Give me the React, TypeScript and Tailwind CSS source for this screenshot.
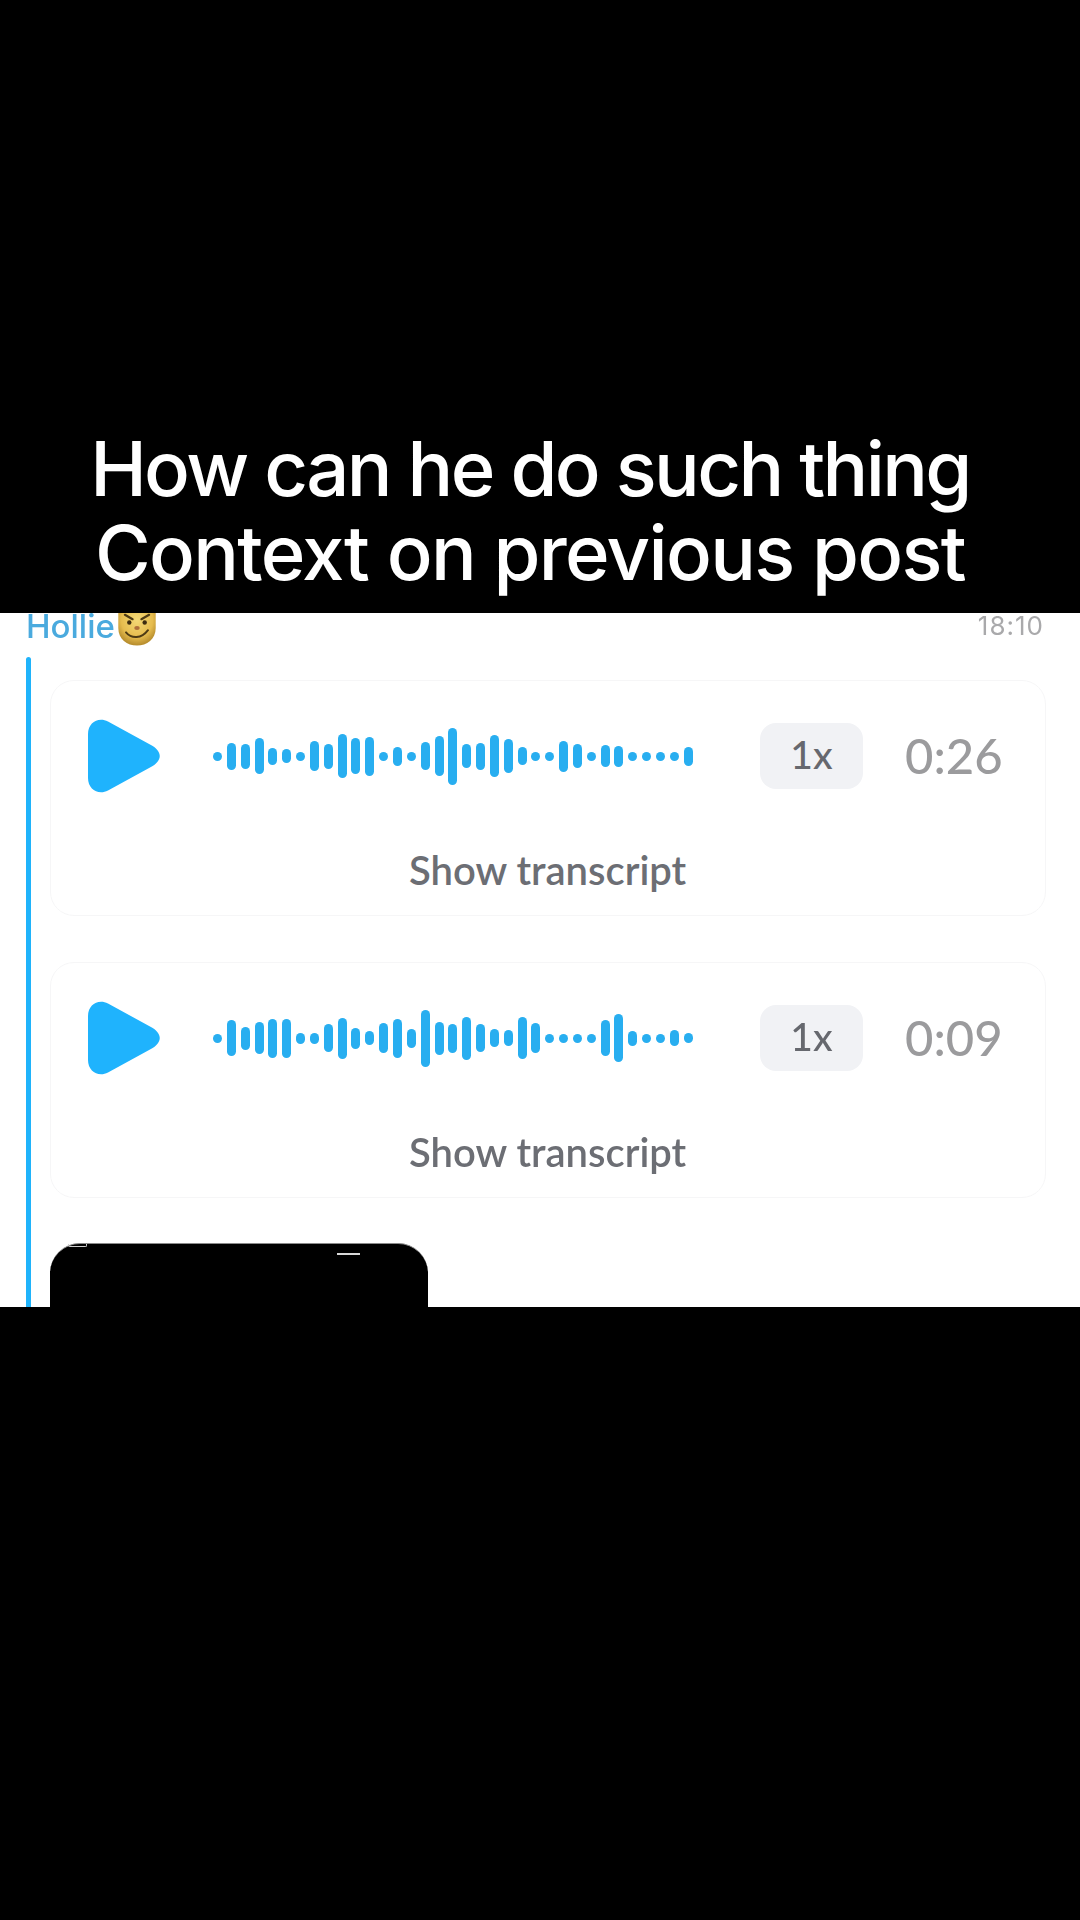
const rowA = [9,27,25,36,17,14,9,30,25,44,36,39,9,19,9,28,40,57,24,27,42,34,18,9,9,31,24,9,22,21,9,9,9,9,19];
const rowB = [9,36,23,32,39,39,11,11,28,41,21,14,30,39,19,57,33,29,43,28,18,16,42,30,9,9,9,9,36,48,15,9,9,16,10];

function Play() {
  return (
    <svg width="73" height="74" viewBox="0 0 73 74" className="shrink-0">
      <path d="M0 15C0 3.500 10.500 -2.500 20 2.500L62 25.500C75 32 75 42 62 48.500L20 71.500C10.500 76.500 0 70.500 0 59Z" fill="#1fb3fd" />
    </svg>
  );
}

function CatEmoji() {
  return (
    <svg width="44" height="44" viewBox="0 0 40 40" className="shrink-0 mt-[4px]">
      <defs>
        <radialGradient id="catFace" cx="50%" cy="38%" r="60%">
          <stop offset="0%" stopColor="#f4d977" />
          <stop offset="70%" stopColor="#e6bc4e" />
          <stop offset="100%" stopColor="#b98f2f" />
        </radialGradient>
      </defs>
      <path d="M3 -2L12 6H28L37 -2L37 20C37 30 29 36 20 36C11 36 3 30 3 20Z" fill="url(#catFace)" />
      <path d="M9 8L16 12M31 8L24 12" stroke="#4d3a14" strokeWidth="2" strokeLinecap="round" />
      <circle cx="13" cy="15" r="2" fill="#3d2c10" />
      <circle cx="27" cy="15" r="2" fill="#3d2c10" />
      <ellipse cx="20" cy="20" rx="2.500" ry="1.800" fill="#b0703a" />
      <path d="M10 24C15 30 24 30 30 22" stroke="#4d3a14" strokeWidth="1.800" fill="none" strokeLinecap="round" />
    </svg>
  );
}

function Voice({ bars, time }: { bars: number[]; time: string }) {
  return (
    <div className="h-[236px] rounded-[24px] border border-[#f6f6f7] bg-white pt-[38px] pr-[40px] pl-[37px]">
      <div className="flex h-[74px] items-center">
        <Play />
        <div className="ml-[52px] flex w-[480px] shrink-0 items-center justify-between">
          {bars.map((h, i) => (
            <div key={i} className="w-[9px] rounded-full bg-[#28aef0]" style={{ height: h }} />
          ))}
        </div>
        <div className="ml-[67px] flex h-[66px] w-[103px] shrink-0 items-center justify-center rounded-[16px] bg-[#f1f2f5] pb-[3px] font-['Lato',sans-serif] text-[39px] font-medium text-[#66686e]">
          1x
        </div>
        <div className="ml-[42px] pb-[2px] font-['Lato',sans-serif] text-[49px] leading-none font-medium text-[#9b9b9d]">
          {time}
        </div>
      </div>
      <div className="mt-[55px] pl-[321px] text-left font-['Lato',sans-serif] text-[40px] leading-[44px] font-semibold text-[#6c6e74]">
        Show transcript
      </div>
    </div>
  );
}

export default function App() {
  return (
    <div className="flex h-[1920px] w-[1080px] flex-col overflow-hidden bg-black">
      <div className="flex h-[613px] shrink-0 flex-col items-center pt-[426px] pr-[20px] font-['Inter',sans-serif] text-[76px] leading-[84px] font-medium text-white">
        <div className="tracking-[-2.6px]">How can he do such thing</div>
        <div className="tracking-[-1.7px]">Context on previous post</div>
      </div>
      <div className="flex h-[694px] shrink-0 flex-col overflow-hidden bg-white pl-[26px]">
        <div className="flex h-[44px] shrink-0 items-center justify-between pr-[36px] pb-[18px] blur-[0.5px]">
          <div className="flex items-center font-['Inter',sans-serif] text-[33px] leading-none font-medium text-[#4aaade]">
            Hollie
            <CatEmoji />
          </div>
          <div className="font-['Inter',sans-serif] text-[26px] leading-none tracking-[1px] text-[#a9a9ab]">18:10</div>
        </div>
        <div className="flex flex-1 gap-[19px]">
          <div className="h-full w-[5px] shrink-0 rounded-t-full bg-[#1fb3fb]" />
          <div className="flex flex-1 flex-col pt-[23px] pr-[34px]">
            <div className="blur-[0.5px]">
              <Voice bars={rowA} time="0:26" />
              <div className="h-[46px]" />
              <Voice bars={rowB} time="0:09" />
            </div>
            <div className="relative mt-[45px] h-[100px] w-[378px] rounded-t-[30px] border-t border-[#8a8a8a] bg-black">
              <div className="absolute top-0 left-[18px] h-[3px] w-[19px] rounded-b-[2px] border border-t-0 border-[#cfcfcf]" />
              <div className="absolute top-[9px] left-[287px] h-[2px] w-[23px] bg-[#d8d8d8]" />
            </div>
          </div>
        </div>
      </div>
    </div>
  );
}
